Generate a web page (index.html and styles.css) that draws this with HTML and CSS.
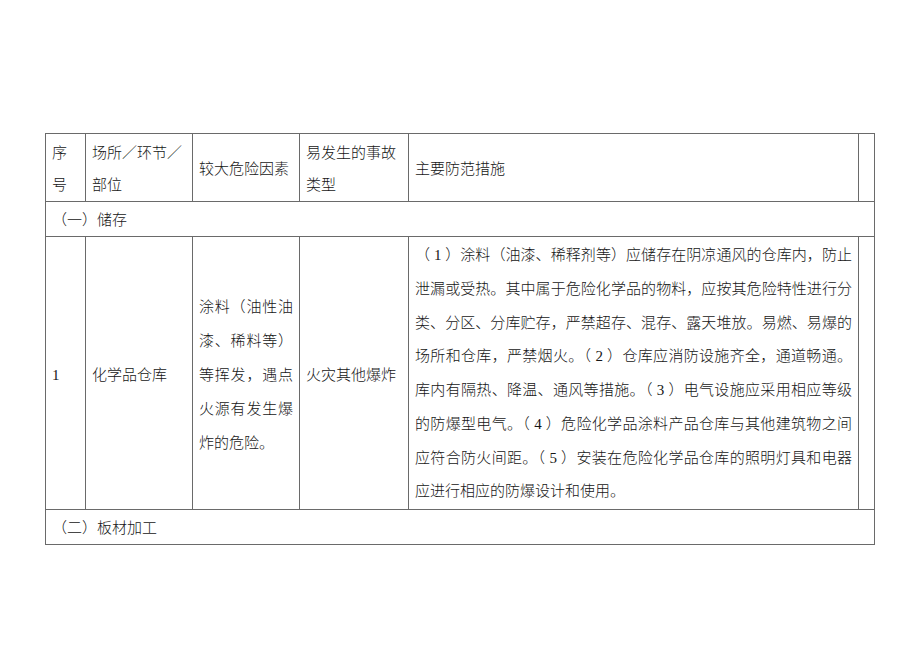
FILE: index.html
```html
<!DOCTYPE html>
<html lang="zh-CN">
<head>
<meta charset="utf-8">
<title>较大危险因素辨识</title>
<link rel="stylesheet" href="styles.css">
</head>
<body>
<div class="page">
  <table class="hazard">
    <colgroup>
      <col class="c-no">
      <col class="c-place">
      <col class="c-factor">
      <col class="c-type">
      <col class="c-measure">
      <col class="c-extra">
    </colgroup>
    <tr class="head">
      <td>序号</td>
      <td>场所／环节／部位</td>
      <td>较大危险因素</td>
      <td>易发生的事故类型</td>
      <td>主要防范措施</td>
      <td></td>
    </tr>
    <tr class="section">
      <td colspan="6">（一）储存</td>
    </tr>
    <tr class="item">
      <td>1</td>
      <td>化学品仓库</td>
      <td class="just">涂料（油性油漆、稀料等）等挥发，遇点火源有发生爆炸的危险。</td>
      <td>火灾其他爆炸</td>
      <td class="just full">（ 1 ）涂料（油漆、稀释剂等）应储存在阴凉通风的仓库内，防止泄漏或受热。其中属于危险化学品的物料，应按其危险特性进行分类、分区、分库贮存，严禁超存、混存、露天堆放。易燃、易爆的场所和仓库，严禁烟火。（ 2 ）仓库应消防设施齐全，通道畅通。库内有隔热、降温、通风等措施。（ 3 ）电气设施应采用相应等级的防爆型电气。（ 4 ）危险化学品涂料产品仓库与其他建筑物之间应符合防火间距。（ 5 ）安装在危险化学品仓库的照明灯具和电器应进行相应的防爆设计和使用。</td>
      <td></td>
    </tr>
    <tr class="section">
      <td colspan="6">（二）板材加工</td>
    </tr>
  </table>
</div>
</body>
</html>
```

FILE: styles.css
```css
html, body {
  margin: 0;
  padding: 0;
  background: #ffffff;
}

.page {
  padding: 133px 0 0 45px;
}

.hazard {
  border-collapse: collapse;
  table-layout: fixed;
  width: 829px;
  font-family: "Liberation Serif", "Noto Sans CJK SC", "Noto Sans CJK JP", serif;
  font-size: 15px;
  line-height: 34px;
  color: #161616;
  font-weight: 300;
}

.c-no { width: 40px; }
.c-place { width: 107px; }
.c-factor { width: 107px; }
.c-type { width: 109px; }
.c-measure { width: 450px; }
.c-extra { width: 16px; }

.hazard td {
  border: 1px solid #6a6a6a;
  padding: 0 6px;
  vertical-align: middle;
  text-align: left;
  word-break: break-all;
}

.hazard .head td {
  line-height: 32px;
  padding-top: 3px;
  padding-bottom: 0;
}

.hazard .section td {
  line-height: 32px;
  padding-top: 2px;
  padding-bottom: 0;
}

.hazard .item td {
  padding-top: 4px;
  padding-bottom: 0;
}

.hazard .item td.full {
  line-height: 33.75px;
  padding-top: 2px;
}

.hazard td.just {
  text-align: justify;
}
```
